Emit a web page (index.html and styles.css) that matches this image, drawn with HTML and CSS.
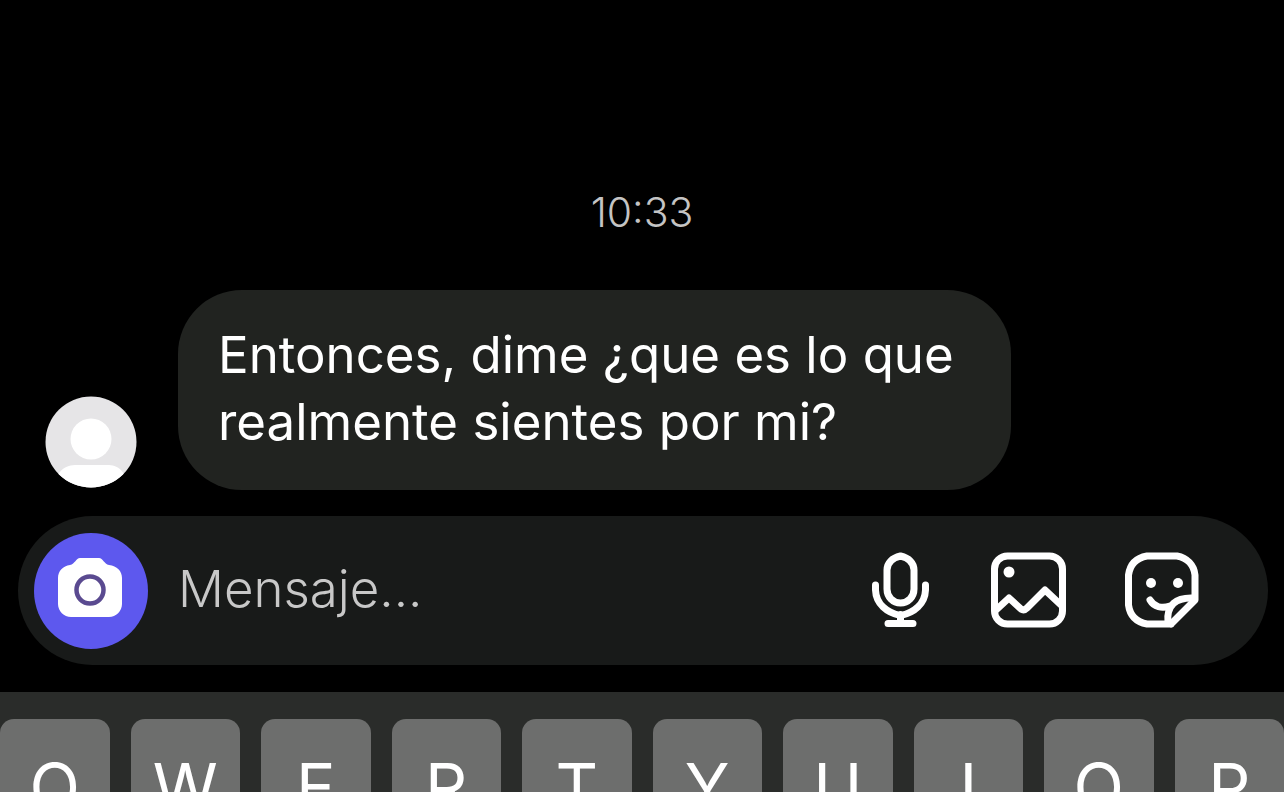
FILE: index.html
```html
<!DOCTYPE html>
<html lang="es">
<head>
    <meta charset="UTF-8">
    <meta name="viewport" content="width=device-width, initial-scale=1">
    <title>Mensajes</title>
    <link rel="stylesheet" href="styles.css">
</head>
<body>
    <main class="thread">
        <time class="time" datetime="10:33">10:33</time>
        <div class="row">
            <svg class="avatar" viewBox="0 0 92 92" aria-hidden="true">
                <defs><clipPath id="face"><circle cx="46" cy="46" r="45.5"/></clipPath></defs>
                <g clip-path="url(#face)">
                    <rect width="92" height="92" fill="#e6e5e7"/>
                    <circle cx="46" cy="43" r="20.5" fill="#fff"/>
                    <path d="M8 92C12 74 20 69 32 69H62C73 69 80 74 84 92Z" fill="#fff"/>
                </g>
            </svg>
            <p class="bubble">Entonces, dime ¿que es lo que realmente sientes por mi?</p>
        </div>
    </main>

    <form class="composer">
        <button type="button" class="camera" aria-label="Cámara">
            <svg viewBox="0 0 66 60" width="66" height="60">
                <path d="M23 1H42C46 1 47 7 52 8C60 9 65 14 65 21V47C65 54 59 60 52 60H14C7 60 1 54 1 47V21C1 14 6 9 13 8C18 7 19 1 23 1Z" fill="#fff"/>
                <circle cx="33" cy="33" r="13.500" fill="none" stroke="#5a4a90" stroke-width="4.500"/>
            </svg>
        </button>
        <input class="text" type="text" placeholder="Mensaje..." aria-label="Mensaje">
        <div class="tools">
            <button type="button" aria-label="Mensaje de voz">
                <svg viewBox="0 0 60 76" width="60" height="76">
                    <path d="M28.500 4C20 6 15 11 15 18V37C15 45 21 51 28.500 51S42 45 42 37V18C42 11 37 6 28.500 4Z"/>
                    <path d="M3.500 33V38C4 52 15 61 28.500 63.500C42 61 53 52 53.500 38V33M28.500 62.500V71M16 71.500H41"/>
                </svg>
            </button>
            <button type="button" aria-label="Galería">
                <svg viewBox="0 0 76 76" width="76" height="76">
                    <rect x="4.500" y="4" width="68" height="68" rx="13"/>
                    <path d="M6 58L19 46L31 57Q34 59 37 56L55 38L71 53"/>
                    <circle class="dot" cx="19" cy="20" r="5.500"/>
                </svg>
            </button>
            <button type="button" aria-label="Stickers">
                <svg viewBox="0 0 76 76" width="76" height="76">
                    <path d="M47 72H23C12 70 6 64 4.500 53V23C6 12 12 6 23 4H53C63 6 70 13 71 23V48L47 72"/>
                    <path d="M44 71C42 53 52 45 70 46"/>
                    <path d="M26 48C30 55 38 57 46 54"/>
                    <circle class="dot" cx="27" cy="31" r="5"/>
                    <circle class="dot" cx="54" cy="31" r="5"/>
                </svg>
            </button>
        </div>
    </form>

    <div class="keyboard">
        <button type="button">Q</button>
        <button type="button">W</button>
        <button type="button">E</button>
        <button type="button">R</button>
        <button type="button">T</button>
        <button type="button">Y</button>
        <button type="button">U</button>
        <button type="button">I</button>
        <button type="button">O</button>
        <button type="button">P</button>
    </div>
</body>
</html>
```

FILE: styles.css
```css
*{box-sizing: border-box;margin: 0;padding: 0;}
body{
    display: flex;
    flex-direction: column;
    height: 100vh;
    overflow: hidden;
    background: #000;
    color: #fff;
    font-family: Inter, "Liberation Sans", sans-serif;
}
button{border: 0;background: none;color: inherit;font-family: inherit;cursor: pointer;}
svg{display: block;}

.thread{
    flex: 1;
    display: flex;
    flex-direction: column;
    justify-content: flex-end;
    gap: 54px;
    padding: 0 45px 26px;
}
.time{
    text-align: center;
    font-size: 41px;
    line-height: 48px;
    font-weight: 300;
    color: #c4c4c4;
}
.row{display: flex;align-items: flex-end;gap: 41px;}
.avatar{flex: none;width: 92px;height: 92px;margin-bottom: 2px;}
.bubble{
    max-width: 833px;
    padding: 31px 40px 35px;
    border-radius: 64px;
    background: #212320;
    font-size: 51px;
    line-height: 67px;
}

.composer{
    display: flex;
    align-items: center;
    height: 149px;
    margin: 0 16px 27px 18px;
    padding: 0 68px 0 16px;
    border-radius: 75px;
    background: #181a19;
}
.camera{
    flex: none;
    display: flex;
    align-items: center;
    justify-content: center;
    width: 114px;
    height: 116px;
    padding: 0 2px 8px 0;
    border-radius: 50%;
    background: #5d58ee;
}
.text{
    flex: 1;
    min-width: 0;
    height: 80px;
    padding: 0 30px 4px;
    border: 0;
    outline: none;
    background: none;
    color: #fff;
    font-family: inherit;
    font-size: 51px;
    font-weight: 300;
}
.text::placeholder{color: #c8c8c8;opacity: 1;}
.tools{display: flex;gap: 58px;padding-bottom: 2px;}
.tools svg{
    fill: none;
    stroke: #fff;
    stroke-width: 7;
    stroke-linecap: round;
    stroke-linejoin: round;
}
.tools .dot{fill: #fff;stroke: none;}

.keyboard{
    display: flex;
    gap: 21px;
    height: 100px;
    padding-top: 27px;
    background: #2a2c2a;
}
.keyboard button{
    flex: 1;
    min-width: 0;
    height: 136px;
    border-radius: 14px;
    background: #6d6e6d;
    font-size: 66px;
}
```
